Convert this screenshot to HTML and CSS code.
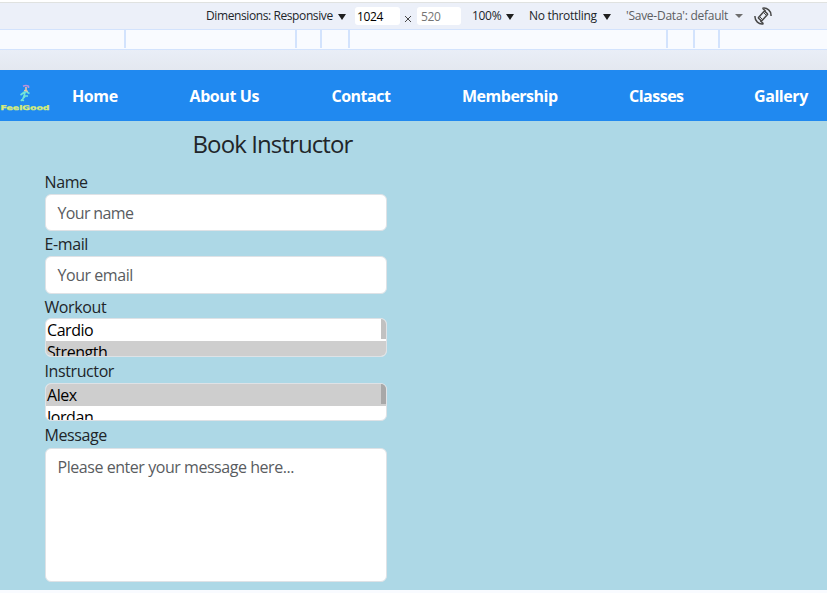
FILE: index.html
```html
<!DOCTYPE html>
<html lang="en">
<head>
<meta charset="utf-8">
<title>Book Instructor</title>
<link rel="stylesheet" href="styles.css">
</head>
<body>
<header class="toolbar">
  <span class="dimensions">Dimensions: Responsive</span><i class="arrow"></i>
  <span class="size width">1024</span>
  <svg class="times" viewBox="0 0 8 8"><path d="M1 1l6 6M7 1L1 7"/></svg>
  <span class="size height">520</span>
  <span class="zoom">100%</span><i class="arrow"></i>
  <span class="throttle">No throttling</span><i class="arrow"></i>
  <span class="savedata">'Save-Data': default</span><i class="arrow muted"></i>
  <svg class="rotate" viewBox="0 0 18 18"><rect x="6.600" y="4.300" width="4.800" height="9.400" rx="1" transform="rotate(42 9 9)"/><path d="M9.500 5.500l3 3M5.500 9.500l3 3" stroke-width="1"/><path d="M8.500 1.200C13 .2 17.500 4 17 9M9.500 16.800C5 17.800.5 14 1 9M8.500 1.200l3.200 3M9.500 16.800l-3.200-3"/></svg>
</header>
<div class="ruler"><i></i><i></i><i></i><i></i><i></i><i></i><i></i></div>
<div class="gutter"></div>
<nav class="nav">
  <svg class="logo" viewBox="0 0 50 28">
    <path class="hair" d="M23 1.200Q26 -.2 28.500 1.200V3"/>
    <path class="skin" d="M26 2v4M24 5.500l4 1"/>
    <path class="runner" d="M25.500 6L24 11l4 0M24.500 7l-4 3M26.500 7l3 1.500M24 11l-1.500 3.500 1.200 1.500M25 11.500l-3 3-1 1.500"/>
    <text x="0.500" y="24.600" textLength="49" lengthAdjust="spacingAndGlyphs">FeelGood</text>
  </svg>
  <a class="home">Home</a><a class="about">About Us</a><a class="contact">Contact</a><a class="member">Membership</a><a class="classes">Classes</a><a class="gallery">Gallery</a>
</nav>
<main class="page">
  <form class="form">
    <h1>Book Instructor</h1>
    <label class="l-name">Name</label>
    <div class="box input i-name">Your name</div>
    <label class="l-email">E-mail</label>
    <div class="box input i-email">Your email</div>
    <label class="l-workout">Workout</label>
    <div class="box list workout">
      <div class="options"><div>Cardio</div><div class="selected">Strength</div></div><i class="thumb"></i>
    </div>
    <label class="l-instructor">Instructor</label>
    <div class="box list">
      <div class="options"><div class="selected">Alex</div><div>Jordan</div></div><i class="thumb dark"></i>
    </div>
    <label class="l-message">Message</label>
    <div class="box message"><span>Please enter your message here...</span></div>
  </form>
</main>
</body>
</html>
```

FILE: styles.css
```css
* { box-sizing: border-box; }
body { margin: 0; width: 827px; height: 593px; overflow: hidden; background: #f9fbff; color: #212529; font: 16px/24px "Open Sans", "Noto Sans", sans-serif; }
.toolbar { margin-top: 2px; height: 28px; border-top: 1px solid #e0e2e0; border-bottom: 1px solid #d3e3fd; background: #ecf0f9; display: flex; align-items: center; padding-left: 206px; font-size: 12px; line-height: 20px; white-space: nowrap; box-shadow: 0 -2px #fff; }
.toolbar span, .toolbar svg, .toolbar i { flex: none; }
.dimensions { width: 132px; letter-spacing: -.4px; }
.arrow { width: 8px; height: 6px; margin-top: 2px; background: #1f1f1f; clip-path: polygon(0 0, 100% 0, 50% 100%); }
.arrow.muted { width: 8px; height: 4px; margin-top: 0; background: #6e6e6e; }
.size { background: #fff; border-radius: 3px; height: 18px; width: 45px; padding-left: 2px; color: #000; letter-spacing: -.35px; }
.width { margin-left: 9px; }
.times { width: 8px; height: 8px; margin: 5px 5px 0 4px; stroke: #474747; fill: none; }
.height { width: 44px; padding-left: 4px; color: #757575; }
.zoom { margin-left: 11px; width: 34px; letter-spacing: -.3px; }
.throttle { margin-left: 15px; width: 74px; letter-spacing: -.3px; }
.savedata { margin-left: 15px; width: 109px; color: #5c5e62; letter-spacing: -.25px; }
.rotate { width: 18px; height: 18px; margin-left: 11px; fill: none; stroke: #474747; stroke-width: 1.5; }
.ruler { height: 20px; border-bottom: 1px solid #d3e3fd; display: grid; grid-template-columns: 124px 171px 25px 28px 318px 27px 25px; }
.ruler i { height: 18px; width: 2px; background: #d3e3fd; justify-self: end; margin-right: -2px; }
.gutter { height: 20px; background: linear-gradient(#e9eef7, #e4e8f0); }
.nav { height: 51px; background: #2089f0; display: flex; align-items: center; color: #fff; font-weight: 700; letter-spacing: -.5px; }
.nav a { width: 0; white-space: nowrap; }
.logo { width: 50px; height: 28px; margin-top: 7px; fill: none; stroke-width: 1.6; letter-spacing: 0; overflow: visible; }
.logo text { font: 900 6.5px "DejaVu Sans", sans-serif; fill: #d8ed78; stroke: #d8ed78; stroke-width: .3; }
.hair { stroke: #bd91dd; }
.skin { stroke: #f2c6a0; }
.runner { stroke: #71e4d8; }
.nav .home { margin-left: 22px; letter-spacing: -.4px; }
.nav .about { margin-left: 117.5px; letter-spacing: -.4px; }
.nav .contact { margin-left: 142px; }
.nav .member { margin-left: 130.5px; }
.nav .classes { margin-left: 167px; }
.nav .gallery { margin-left: 125px; letter-spacing: -.42px; }
.page { height: 469px; background: #add8e6; padding-left: 44.5px; }
.form { width: 342px; letter-spacing: -.45px; }
h1 { margin: 0; padding: 8px 0 0 148px; height: 48px; font-size: 24px; line-height: 29px; font-weight: 400; white-space: nowrap; letter-spacing: -.9px; }
label { display: block; height: 25px; line-height: 27px; letter-spacing: -.4px; }
.box { border: 1px solid #dee2e6; border-radius: 6px; background: #fff; overflow: hidden; }
.input { height: 37px; padding: 0 12px; line-height: 36px; color: #595c5f; }
.i-name { letter-spacing: -.65px; }
.i-email { height: 38px; }
.l-workout { height: 24px; }
.list { height: 38px; display: flex; position: relative; color: #000; }
.workout { height: 39px; }
.options { flex: 1; }
.options div { height: 22px; line-height: 22px; padding-left: 1.5px; }
.options .selected { background: #cecece; }
.thumb { position: absolute; right: 0; top: 0; width: 5px; height: 20px; background: #c1c1c1; }
.thumb.dark { background: #a8a8a8; }
.l-instructor { height: 26px; line-height: 29px; }
.l-message { height: 27px; line-height: 29px; }
.message { height: 134px; padding: 6px 12px; color: #595c5f; }
```
